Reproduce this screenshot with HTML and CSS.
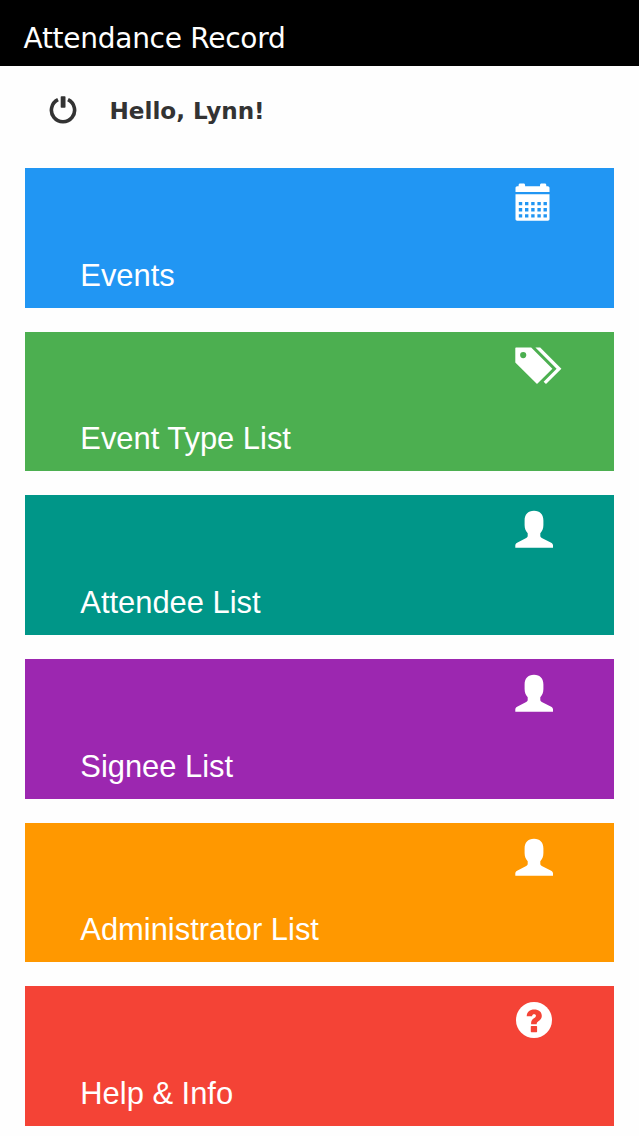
FILE: index.html
```
<!DOCTYPE html>
<html lang="en">
<head>
    <meta charset="UTF-8">
    <meta name="viewport" content="width=device-width, initial-scale=1.0">
    <title>Attendance Record</title>
    <link rel="stylesheet" href="styles.css">
</head>
<body>
    <!-- Shared icon shapes -->
    <svg class="icon-defs" width="0" height="0">
        <symbol id="icon-user" viewBox="0 0 48 40">
            <path d="M19 .8C25.2 .8 28.4 4.7 28.4 10.5V15C28.4 18.5 27.2 21.2 25.3 23.3V25.8C25.3 27 25.8 27.5 26.8 28L36.2 32.7C37.4 33.3 38 34.3 38 35.5V37.8H.3V35.5C.3 34.3 .9 33.3 2.1 32.7L11.2 28C12.2 27.5 12.7 27 12.7 25.8V23.3C10.8 21.2 9.6 18.5 9.6 15V10.5C9.6 4.7 12.8 .8 19 .8Z"/>
        </symbol>
    </svg>

    <header class="header">
        <h1>Attendance Record</h1>
    </header>

    <div class="greeting">
        <svg class="power-icon" viewBox="0 0 28 28">
            <path d="M9 3.7A11.6 11.6 0 1 0 19 3.7" fill="none" stroke="#333" stroke-width="3.6"/>
            <rect x="11.7" y="0.3" width="4.8" height="11.4" rx="0.8" fill="#333"/>
        </svg>
        <span class="greeting-text">Hello, Lynn!</span>
    </div>

    <!-- Menu -->
    <main class="menu">
        <a class="tile events">
            <svg class="tile-icon" viewBox="0 0 48 40">
                <path d="M.5 9V5C.5 4 1.2 3.3 2.2 3.3H3.6V2.2C3.6 1.2 4.2.5 5.2.5H8.5C9.5.5 10.1 1.2 10.1 2.2V3.3H25V2.2C25 1.2 25.6.5 26.6.5H29.7C30.7.5 31.3 1.2 31.3 2.2V3.3H32.8C33.8 3.3 34.5 4 34.5 5V9Z"/>
                <path fill-rule="evenodd" d="M.5 11.2H34.5V36C34.5 37.1 33.9 37.7 32.8 37.7H2.2C1.1 37.7.5 37.1.5 36Z
                    M3.8 18.9v3.4h3.4v-3.4z M10 18.9v3.4h3.4v-3.4z M16.2 18.9v3.4h3.4v-3.4z M22.4 18.9v3.4h3.4v-3.4z M28.5 18.9v3.4h3.4v-3.4z
                    M3.8 25v3.4h3.4v-3.4z M10 25v3.4h3.4v-3.4z M16.2 25v3.4h3.4v-3.4z M22.4 25v3.4h3.4v-3.4z M28.5 25v3.4h3.4v-3.4z
                    M3.8 31.2v3.4h3.4v-3.4z M10 31.2v3.4h3.4v-3.4z M16.2 31.2v3.4h3.4v-3.4z M22.4 31.2v3.4h3.4v-3.4z M28.5 31.2v3.4h3.4v-3.4z"/>
            </svg>
            <span class="tile-label">Events</span>
        </a>
        <a class="tile event-types">
            <svg class="tile-icon" viewBox="0 0 48 40">
                <path fill-rule="evenodd" d="M.3 1.5C.3.9.7.5 1.3.5H16.2L37.4 21.7 22 37.1.3 15.4Z M8.2 5A3.1 3.1 0 1 0 8.2 11.2 3.1 3.1 0 1 0 8.2 5Z"/>
                <path d="M20.4.5H25.2L46.4 21.7 31 37.1 28.6 34.7 41.6 21.7Z"/>
            </svg>
            <span class="tile-label">Event Type List</span>
        </a>
        <a class="tile attendees">
            <svg class="tile-icon"><use href="#icon-user"/></svg>
            <span class="tile-label">Attendee List</span>
        </a>
        <a class="tile signees">
            <svg class="tile-icon"><use href="#icon-user"/></svg>
            <span class="tile-label">Signee List</span>
        </a>
        <a class="tile administrators">
            <svg class="tile-icon"><use href="#icon-user"/></svg>
            <span class="tile-label">Administrator List</span>
        </a>
        <a class="tile help">
            <svg class="tile-icon" viewBox="0 0 48 40">
                <circle cx="19" cy="19" r="18"/>
                <path d="M11.7 15.2C11.9 10.6 14.8 8.4 19.2 8.4 23.8 8.4 26.8 10.8 26.8 14.7 26.8 17.3 25.5 18.9 23.4 20.3 22.1 21.2 21.7 21.8 21.7 23.3H16.1C16 20 16.8 18.7 18.9 17.3 20.3 16.4 20.9 15.8 20.9 14.8 20.9 13.8 20.3 13.3 19.2 13.3 17.9 13.3 17.2 13.9 17.1 15.2Z" fill="#f44336"/>
                <rect x="15.8" y="25.1" width="6.3" height="6.1" rx="0.6" fill="#f44336"/>
            </svg>
            <span class="tile-label">Help &amp; Info</span>
        </a>
    </main>
</body>
</html>
```

FILE: styles.css
```
* {
    box-sizing: border-box;
}
body {
    margin: 0;
    background-color: #fefefe;
    font-family: "Liberation Sans", Arial, sans-serif;
}
.icon-defs {
    display: block;
}
.header {
    height: 66.4px;
    padding: 22px 23.5px 0;
    background-color: #000;
}
h1 {
    margin: 0;
    color: #fff;
    font-family: "DejaVu Sans", Verdana, sans-serif;
    font-size: 28px;
    font-weight: normal;
    line-height: 34px;
    letter-spacing: -0.27px;
}
.greeting {
    display: flex;
    align-items: center;
    height: 101.8px;
    padding: 0 49px 15px;
}
.power-icon {
    width: 28px;
    height: 28px;
    margin-right: 32.5px;
}
.greeting-text {
    padding-top: 2px;
    color: #333;
    font-family: "DejaVu Sans", Verdana, sans-serif;
    font-size: 23.1px;
    font-weight: bold;
}
.menu {
    display: flex;
    flex-direction: column;
    gap: 24.25px;
    padding: 0 25px;
}
.tile {
    display: flex;
    flex-direction: column;
    justify-content: space-between;
    height: 139.4px;
    padding: 15px 51px 14px 55.3px;
    color: #fff;
}
.tile-icon {
    align-self: flex-end;
    width: 48px;
    height: 40px;
    fill: #fff;
}
.tile-label {
    font-size: 30.9px;
    line-height: 36px;
}
.events {
    background-color: #2196f3;
}
.event-types {
    background-color: #4caf50;
}
.attendees {
    background-color: #009688;
}
.signees {
    background-color: #9c27b0;
}
.administrators {
    background-color: #ff9800;
}
.help {
    background-color: #f44336;
}
```
